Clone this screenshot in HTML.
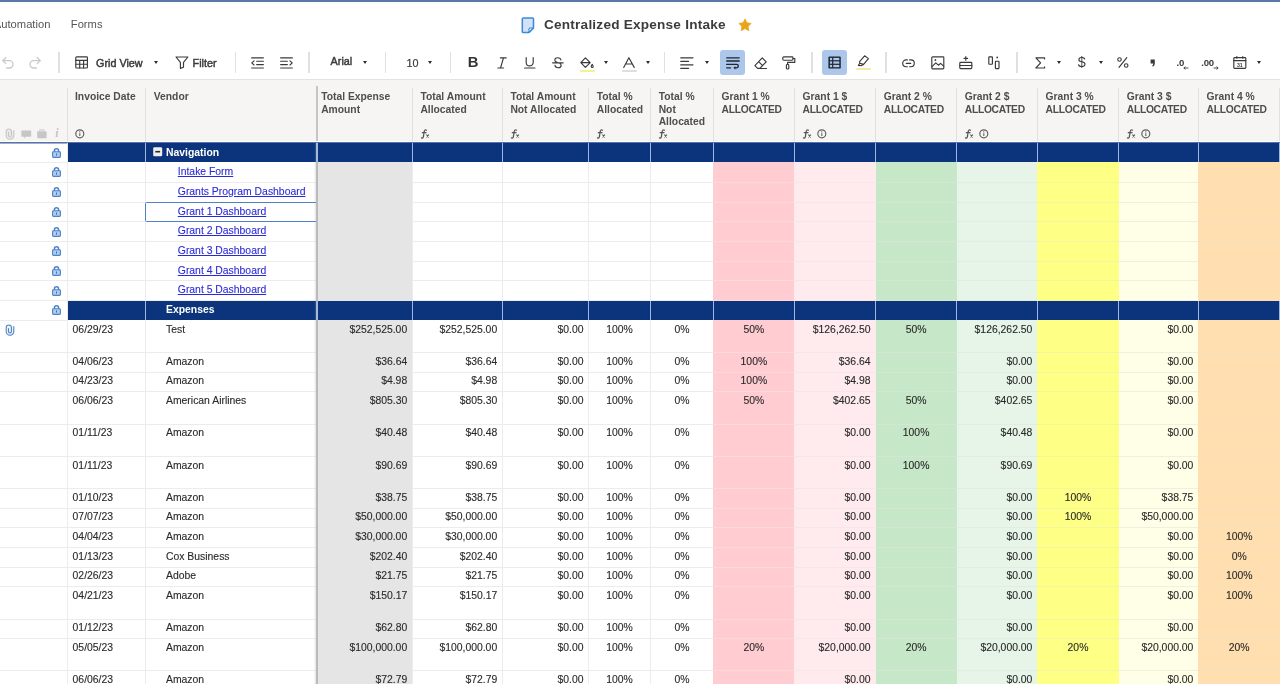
<!DOCTYPE html>
<html><head><meta charset="utf-8"><title>Centralized Expense Intake</title>
<style>
*{box-sizing:border-box;margin:0;padding:0}
html,body{width:1280px;height:684px;overflow:hidden;background:#fff}
body{position:relative;font-family:"Liberation Sans",sans-serif;color:#333}
.a{position:absolute}
.tb{position:absolute;overflow:visible}
.tb path,.tb line,.tb rect,.tb circle,.tb polyline,.tb polygon{vector-effect:none}
.sep{position:absolute;top:52.4px;height:20.6px;width:1.7px;background:#e0e0e0}
.caret{position:absolute;width:0;height:0;border-left:2.6px solid transparent;border-right:2.6px solid transparent;border-top:3.4px solid #2e2e2e;top:60.7px}
.tt{position:absolute;font-size:10.8px;color:#3a3a3a;white-space:nowrap;line-height:12px;-webkit-text-stroke:0.45px #3a3a3a}
.hd{position:absolute;font-weight:bold;font-size:10.3px;line-height:12.4px;color:#4e4e4e;white-space:nowrap;top:91.1px;letter-spacing:0px}
.al{letter-spacing:-0.3px}
.hl{position:absolute;top:88px;width:1px;height:53px;background:#e2e1e0}
.c{position:absolute;font-size:10.4px;line-height:12px;white-space:nowrap;color:#2a2a2a;-webkit-text-stroke:0.12px #2a2a2a}
.bg{position:absolute}
.gl{position:absolute;height:1px}
.vl{position:absolute;width:1px;background:#ececec}
.lk{color:#2a2ad8;-webkit-text-stroke:0.1px #2a2ad8;text-decoration:underline;text-underline-offset:1px}
.bt{color:#fff;font-weight:bold;-webkit-text-stroke:0}
#w{position:absolute;left:0;top:0;width:1280px;height:684px;overflow:hidden;will-change:transform}
</style></head><body><div id="w">

<div class="a" style="left:0;top:0;width:1280px;height:2.4px;background:#5a77a6"></div>
<div class="a" style="left:-6.2px;top:17.6px;font-size:11.2px;line-height:13px;color:#555;white-space:nowrap">Automation</div>
<div class="a" style="left:70.8px;top:17.6px;font-size:11.2px;line-height:13px;color:#555;white-space:nowrap">Forms</div>
<svg class="tb" style="left:520.6px;top:17px" width="14" height="17" viewBox="0 0 14 17"><path d="M2.2 1.1 H11.6 A0.9 0.9 0 0 1 12.5 2 V11 L8 15.6 H2.2 A0.9 0.9 0 0 1 1.3 14.7 V2 A0.9 0.9 0 0 1 2.2 1.1 Z" fill="#d3e2f7" stroke="#3b8ad8" stroke-width="1.5" stroke-linejoin="round"/><path d="M12.4 11 H9 A1 1 0 0 0 8 12 V15.5 Z" fill="#eef5fd" stroke="#3b8ad8" stroke-width="1.1" stroke-linejoin="round"/></svg>
<div class="a" style="left:544px;top:16.5px;font-size:13.6px;line-height:16px;font-weight:bold;color:#3c3c3c;white-space:nowrap;letter-spacing:0.22px" id="title">Centralized Expense Intake</div>
<svg class="tb" style="left:737.6px;top:18.2px" width="14" height="14" viewBox="0 0 24 24"><path d="M12 1.6l3.2 6.7 7.3 1-5.3 5.1 1.3 7.3L12 18.2l-6.5 3.5 1.3-7.3L1.5 9.3l7.3-1z" fill="#e9a41b" stroke="#e9a41b" stroke-width="1.4" stroke-linejoin="round"/></svg>
<div class="a" style="left:0;top:78.6px;width:1280px;height:1.6px;background:#e4e3e2"></div>
<svg class="tb" style="left:2px;top:56px" width="13" height="13" viewBox="0 0 13 13"><path d="M0.8 4.6 H7.3 A3.7 3.7 0 0 1 7.3 12 H4.6" stroke="#c9c9c9" fill="none" stroke-width="1.3" stroke-linecap="round" stroke-linejoin="round"/><path d="M3.8 1.5 L0.8 4.6 L3.8 7.6" stroke="#c9c9c9" fill="none" stroke-width="1.3" stroke-linecap="round" stroke-linejoin="round"/></svg>
<svg class="tb" style="left:28.4px;top:56px" width="13" height="13" viewBox="0 0 13 13"><path d="M12.2 4.6 H5.7 A3.7 3.7 0 0 0 5.7 12 H8.4" stroke="#c9c9c9" fill="none" stroke-width="1.3" stroke-linecap="round" stroke-linejoin="round"/><path d="M9.2 1.5 L12.2 4.6 L9.2 7.6" stroke="#c9c9c9" fill="none" stroke-width="1.3" stroke-linecap="round" stroke-linejoin="round"/></svg>
<div class="sep" style="left:58px"></div>
<div class="sep" style="left:234.6px"></div>
<div class="sep" style="left:308.2px"></div>
<div class="sep" style="left:384.6px"></div>
<div class="sep" style="left:449.6px"></div>
<div class="sep" style="left:663.8px"></div>
<div class="sep" style="left:811.4px"></div>
<div class="sep" style="left:885.4px"></div>
<div class="sep" style="left:1016px"></div>
<svg class="tb" style="left:75px;top:56.2px" width="14" height="13" viewBox="0 0 14 13"><rect x="0.8" y="0.8" width="11.6" height="11.2" rx="0.8" stroke="#3a3a3a" fill="none" stroke-width="1.15" stroke-linecap="round" stroke-linejoin="round"/><path d="M0.8 4.4 H12.4 M0.8 8.2 H12.4 M4.7 4.4 V12 M8.6 4.4 V12" stroke="#3a3a3a" fill="none" stroke-width="1.15" stroke-linecap="round" stroke-linejoin="round"/></svg>
<div class="tt" style="left:96px;top:56.6px" id="gv">Grid View</div>
<div class="caret" style="left:153.6px"></div>
<svg class="tb" style="left:175.4px;top:56px" width="14" height="14" viewBox="0 0 14 14"><path d="M1 1 H12.9 L8.5 6.3 V11.3 L5.4 12.4 V6.3 Z" stroke="#3a3a3a" fill="none" stroke-width="1.15" stroke-linecap="round" stroke-linejoin="round" stroke-width="1.45"/></svg>
<div class="tt" style="left:192.6px;top:56.6px" id="flt">Filter</div>
<svg class="tb" style="left:251.4px;top:56.6px" width="13" height="13" viewBox="0 0 13 13"><path d="M0.6 0.8 H12.4 M0.6 11 H12.4 M5.6 4.2 H12.4 M5.6 7.6 H12.4 M3 3.8 L0.8 5.9 L3 8" stroke="#3a3a3a" fill="none" stroke-width="1.15" stroke-linecap="round" stroke-linejoin="round" stroke-width="1.3"/></svg>
<svg class="tb" style="left:279.8px;top:56.6px" width="13" height="13" viewBox="0 0 13 13"><path d="M0.6 0.8 H12.4 M0.6 11 H12.4 M0.6 4.2 H7.4 M0.6 7.6 H7.4 M10 3.8 L12.2 5.9 L10 8" stroke="#3a3a3a" fill="none" stroke-width="1.15" stroke-linecap="round" stroke-linejoin="round" stroke-width="1.3"/></svg>
<div class="tt" style="left:330.6px;top:55.4px" id="arial">Arial</div>
<div class="caret" style="left:362.6px"></div>
<div class="tt" style="left:406.4px;top:56.6px;-webkit-text-stroke:0.2px #3a3a3a" id="ten">10</div>
<div class="caret" style="left:428px"></div>
<div class="a" style="left:467.8px;top:53.9px;font-size:14.8px;line-height:17px;font-weight:bold;color:#333">B</div>
<svg class="tb" style="left:496.6px;top:57px" width="10" height="12" viewBox="0 0 10 12"><path d="M3.4 0.9 H9.2 M0.8 11 H6.6 M6.5 0.9 L3.5 11" stroke="#3a3a3a" fill="none" stroke-width="1.15" stroke-linecap="round" stroke-linejoin="round" stroke-width="1.25"/></svg>
<svg class="tb" style="left:524px;top:57px" width="12" height="12" viewBox="0 0 12 12"><path d="M2.2 0.6 V5.4 A3.5 3.5 0 0 0 9.2 5.4 V0.6 M0.6 11 H11" stroke="#3a3a3a" fill="none" stroke-width="1.15" stroke-linecap="round" stroke-linejoin="round" stroke-width="1.25"/></svg>
<svg class="tb" style="left:552.4px;top:57px" width="12" height="12" viewBox="0 0 12 12"><path d="M8.9 3.0 C8.6 1.4 7.4 0.7 5.8 0.7 C4.2 0.7 2.8 1.5 2.8 3.0 C2.8 4.2 3.6 4.9 5.0 5.4 M3.0 8.4 C3.3 10.1 4.5 10.7 6.0 10.7 C7.7 10.7 9.1 9.9 9.1 8.4 C9.1 7.6 8.7 7.0 8.0 6.6 M0.6 5.8 H11.2" stroke="#3a3a3a" fill="none" stroke-width="1.15" stroke-linecap="round" stroke-linejoin="round" stroke-width="1.2"/></svg>
<svg class="tb" style="left:580.4px;top:56.6px" width="14" height="12" viewBox="0 0 14 12"><path d="M5.4 0.8 L10.2 5.6 L5.4 10.4 L0.8 5.6 Z M0.9 5.6 H10.1" stroke="#3a3a3a" fill="none" stroke-width="1.15" stroke-linecap="round" stroke-linejoin="round" stroke-width="1.2"/><path d="M12.2 7.4 C12.9 8.4 13.2 9 13.2 9.5 A1 1 0 0 1 11.2 9.5 C11.2 9 11.5 8.4 12.2 7.4 Z" stroke="#3a3a3a" fill="none" stroke-width="1.15" stroke-linecap="round" stroke-linejoin="round" stroke-width="1"/></svg>
<div class="a" style="left:580px;top:69.8px;width:15px;height:2.2px;background:#f3f38c;border-radius:1px"></div>
<div class="caret" style="left:604.4px"></div>
<svg class="tb" style="left:623px;top:56.8px" width="12" height="11" viewBox="0 0 12 11"><path d="M0.7 10.4 L5.9 0.7 L11.2 10.4 M2.6 7 H9.3" stroke="#3a3a3a" fill="none" stroke-width="1.15" stroke-linecap="round" stroke-linejoin="round" stroke-width="1.25"/></svg>
<div class="a" style="left:622px;top:69.8px;width:15px;height:2.2px;background:#dedede;border-radius:1px"></div>
<div class="caret" style="left:645.8px"></div>
<svg class="tb" style="left:680.4px;top:57px" width="14" height="12" viewBox="0 0 14 12"><path d="M0.7 0.8 H13 M0.7 4.3 H8.6 M0.7 7.8 H13 M0.7 11.3 H8.6" stroke="#3a3a3a" fill="none" stroke-width="1.15" stroke-linecap="round" stroke-linejoin="round"/></svg>
<div class="caret" style="left:704.8px"></div>
<div class="a" style="left:720px;top:50.2px;width:25.2px;height:24.8px;background:#adc7ea;border-radius:3px"></div>
<svg class="tb" style="left:725.8px;top:57px" width="14" height="12" viewBox="0 0 14 12"><path d="M0.7 0.8 H13.2 M0.7 4.0 H13.2 M0.7 7.4 H10.6 A1.7 1.7 0 0 1 10.6 10.8 H8.6 M0.7 10.8 H4.6" stroke="#1e2633" fill="none" stroke-width="1.35" stroke-linecap="round"/><path d="M9.4 9.2 L7.4 10.8 L9.4 12.4 Z" fill="#1e2633"/></svg>
<svg class="tb" style="left:754.4px;top:56.6px" width="14" height="13" viewBox="0 0 14 13"><path d="M8.2 0.9 L12.2 4.9 L5.8 11.3 H3.6 L0.9 8.6 Z M4.6 4.6 L8.6 8.6 M5.8 11.5 H12.6" stroke="#3a3a3a" fill="none" stroke-width="1.15" stroke-linecap="round" stroke-linejoin="round" stroke-width="1.2"/></svg>
<svg class="tb" style="left:782.4px;top:56px" width="14" height="14" viewBox="0 0 14 14"><rect x="0.8" y="0.8" width="10.2" height="3.4" rx="0.9" stroke="#3a3a3a" fill="none" stroke-width="1.15" stroke-linecap="round" stroke-linejoin="round" stroke-width="1.2"/><path d="M11 2.5 H12.8 V6.4 H5.6 V8.2" stroke="#3a3a3a" fill="none" stroke-width="1.15" stroke-linecap="round" stroke-linejoin="round" stroke-width="1.2"/><rect x="4.4" y="8.2" width="2.4" height="4.8" rx="1" stroke="#3a3a3a" fill="none" stroke-width="1.15" stroke-linecap="round" stroke-linejoin="round" stroke-width="1.2"/></svg>
<div class="a" style="left:822.2px;top:50.2px;width:25.2px;height:24.8px;background:#adc7ea;border-radius:3px"></div>
<svg class="tb" style="left:828.4px;top:56.4px" width="13" height="13" viewBox="0 0 13 13"><rect x="0.4" y="0.4" width="12.4" height="12.2" rx="1.2" fill="#1e2633"/><rect x="1.9" y="1.9" width="2.2" height="2.3" fill="#adc7ea"/><rect x="5.3" y="1.9" width="6" height="2.3" fill="#adc7ea"/><rect x="1.9" y="5.4" width="2.2" height="2.3" fill="#adc7ea"/><rect x="5.3" y="5.4" width="6" height="2.3" fill="#adc7ea"/><rect x="1.9" y="8.9" width="2.2" height="2.3" fill="#adc7ea"/><rect x="5.3" y="8.9" width="6" height="2.3" fill="#adc7ea"/></svg>
<svg class="tb" style="left:857px;top:55.4px" width="13" height="12" viewBox="0 0 13 12"><path d="M7.6 0.8 L11.4 3.6 L6.6 9.4 L2.8 8.2 L2.6 6.6 Z M2.8 8.2 L1.4 10.4 L4.4 10.6 L6.6 9.4" stroke="#3a3a3a" fill="none" stroke-width="1.15" stroke-linecap="round" stroke-linejoin="round" stroke-width="1.15"/></svg>
<div class="a" style="left:856px;top:68px;width:15px;height:2.2px;background:#f6e9a2;border-radius:1px"></div>
<svg class="tb" style="left:902.4px;top:58.6px" width="13" height="9" viewBox="0 0 13 9"><path d="M5.4 0.9 H4.1 A3.3 3.3 0 0 0 4.1 7.7 H5.4 M7.6 0.9 H8.9 A3.3 3.3 0 0 1 8.9 7.7 H7.6 M4.2 4.3 H8.8" stroke="#3a3a3a" fill="none" stroke-width="1.15" stroke-linecap="round" stroke-linejoin="round" stroke-width="1.25"/></svg>
<svg class="tb" style="left:930.6px;top:56px" width="14" height="14" viewBox="0 0 14 14"><rect x="0.8" y="0.8" width="12" height="12" rx="0.8" stroke="#3a3a3a" fill="none" stroke-width="1.15" stroke-linecap="round" stroke-linejoin="round" stroke-width="1.2"/><path d="M1 10.6 L4.8 6.8 L7.4 9.2 L9.6 7.4 L12.6 10.2" stroke="#3a3a3a" fill="none" stroke-width="1.15" stroke-linecap="round" stroke-linejoin="round" stroke-width="1.1"/><circle cx="4.4" cy="4" r="0.9" fill="#3a3a3a"/></svg>
<svg class="tb" style="left:958.8px;top:56px" width="14" height="14" viewBox="0 0 14 14"><rect x="0.8" y="6.4" width="12" height="6.2" rx="0.8" stroke="#3a3a3a" fill="none" stroke-width="1.15" stroke-linecap="round" stroke-linejoin="round" stroke-width="1.2"/><path d="M0.8 9.5 H12.8" stroke="#3a3a3a" fill="none" stroke-width="1.15" stroke-linecap="round" stroke-linejoin="round" stroke-width="1.2"/><path d="M6.8 0.6 V4.2 M5 2.4 H8.6" stroke="#3a3a3a" fill="none" stroke-width="1.15" stroke-linecap="round" stroke-linejoin="round" stroke-width="1.2"/></svg>
<svg class="tb" style="left:987.6px;top:56px" width="13" height="14" viewBox="0 0 13 14"><rect x="0.8" y="0.8" width="3.6" height="7.4" rx="0.5" stroke="#3a3a3a" fill="none" stroke-width="1.15" stroke-linecap="round" stroke-linejoin="round" stroke-width="1.2"/><rect x="7.4" y="5.2" width="3.6" height="7.4" rx="0.5" stroke="#3a3a3a" fill="none" stroke-width="1.15" stroke-linecap="round" stroke-linejoin="round" stroke-width="1.2"/><circle cx="9.2" cy="1.4" r="0.9" fill="#3a3a3a"/></svg>
<svg class="tb" style="left:1035px;top:57px" width="11" height="12" viewBox="0 0 11 12"><path d="M9.6 1.9 V0.8 H0.9 L5.6 5.9 L0.9 11 H9.6 V9.9" stroke="#3a3a3a" fill="none" stroke-width="1.15" stroke-linecap="round" stroke-linejoin="round" stroke-width="1.35"/></svg>
<div class="caret" style="left:1057px"></div>
<div class="a" style="left:1077.8px;top:53.8px;font-size:14.4px;line-height:17px;color:#3a3a3a">$</div>
<div class="caret" style="left:1098.8px"></div>
<svg class="tb" style="left:1117.4px;top:57.2px" width="12" height="11" viewBox="0 0 12 11"><path d="M9.8 0.7 L2 10.4" stroke="#3a3a3a" fill="none" stroke-width="1.15" stroke-linecap="round" stroke-linejoin="round" stroke-width="1.2"/><circle cx="2.5" cy="2.5" r="1.75" stroke="#3a3a3a" fill="none" stroke-width="1.15" stroke-linecap="round" stroke-linejoin="round" stroke-width="1.1"/><circle cx="9.2" cy="8.5" r="1.75" stroke="#3a3a3a" fill="none" stroke-width="1.15" stroke-linecap="round" stroke-linejoin="round" stroke-width="1.1"/></svg>
<svg class="tb" style="left:1149.6px;top:59px" width="6" height="8" viewBox="0 0 6 8"><path d="M0.6 0.4 H4.8 V4.4 C4.8 6 4 7.2 2.6 7.6 L2.2 6.6 C3 6.2 3.2 5.4 3.2 4.4 H0.6 Z" fill="#3a3a3a"/></svg>
<div class="a" style="left:1176.6px;top:57.4px;font-size:9.6px;line-height:11px;font-weight:bold;color:#3a3a3a;letter-spacing:-0.2px">.0</div>
<svg class="tb" style="left:1182.6px;top:66.4px" width="6" height="4" viewBox="0 0 6 4"><path d="M5.4 2 H1 M2.4 0.6 L0.8 2 L2.4 3.4" stroke="#3a3a3a" stroke-width="0.9" fill="none"/></svg>
<div class="a" style="left:1201.2px;top:57.4px;font-size:9.6px;line-height:11px;font-weight:bold;color:#3a3a3a;letter-spacing:-0.2px">.00</div>
<svg class="tb" style="left:1212.6px;top:66.4px" width="6" height="4" viewBox="0 0 6 4"><path d="M0.6 2 H5 M3.6 0.6 L5.2 2 L3.6 3.4" stroke="#3a3a3a" stroke-width="0.9" fill="none"/></svg>
<svg class="tb" style="left:1233.4px;top:56.4px" width="14" height="13" viewBox="0 0 14 13"><rect x="0.8" y="1.6" width="12" height="10.8" rx="0.8" stroke="#3a3a3a" fill="none" stroke-width="1.15" stroke-linecap="round" stroke-linejoin="round" stroke-width="1.15"/><path d="M0.8 4.6 H12.8 M3.8 0.5 V2.2 M9.8 0.5 V2.2" stroke="#3a3a3a" fill="none" stroke-width="1.15" stroke-linecap="round" stroke-linejoin="round" stroke-width="1.15"/><text x="6.8" y="10.6" font-size="5.2" font-weight="bold" text-anchor="middle" fill="#3a3a3a" stroke="none" font-family="Liberation Sans">31</text></svg>
<div class="caret" style="left:1257px"></div>
<div class="a" style="left:0;top:80.2px;width:1280px;height:60.8px;background:#f6f5f4"></div>
<div class="hl" style="left:67.3px"></div>
<div class="hl" style="left:144.9px"></div>
<div class="hl" style="left:411.7px"></div>
<div class="hl" style="left:501.7px"></div>
<div class="hl" style="left:588.1px"></div>
<div class="hl" style="left:650px"></div>
<div class="hl" style="left:712.9px"></div>
<div class="hl" style="left:793.9px"></div>
<div class="hl" style="left:875.1px"></div>
<div class="hl" style="left:956.1px"></div>
<div class="hl" style="left:1036.9px"></div>
<div class="hl" style="left:1118.1px"></div>
<div class="hl" style="left:1197.9px"></div>
<div class="hd" style="left:75px">Invoice Date</div>
<div class="hd" style="left:153.8px">Vendor</div>
<div class="hd" style="left:321.2px">Total Expense<br>Amount</div>
<div class="hd" style="left:420.4px">Total Amount<br>Allocated</div>
<div class="hd" style="left:510.4px">Total Amount<br>Not Allocated</div>
<div class="hd" style="left:596.8px">Total %<br>Allocated</div>
<div class="hd" style="left:658.7px">Total %<br>Not<br>Allocated</div>
<div class="hd" style="left:721.6px">Grant 1 %<br><span class="al">ALLOCATED</span></div>
<div class="hd" style="left:802.6px">Grant 1 $<br><span class="al">ALLOCATED</span></div>
<div class="hd" style="left:883.8px">Grant 2 %<br><span class="al">ALLOCATED</span></div>
<div class="hd" style="left:964.8px">Grant 2 $<br><span class="al">ALLOCATED</span></div>
<div class="hd" style="left:1045.6px">Grant 3 %<br><span class="al">ALLOCATED</span></div>
<div class="hd" style="left:1126.8px">Grant 3 $<br><span class="al">ALLOCATED</span></div>
<div class="hd" style="left:1206.6px">Grant 4 %<br><span class="al">ALLOCATED</span></div>
<svg class="tb" style="left:5.4px;top:127.6px" width="10" height="12" viewBox="0 0 10 12"><path d="M8.8 2.6 V7.4 A3.8 3.8 0 0 1 1.2 7.4 V3.6 A2.6 2.6 0 0 1 6.4 3.6 V7.4 A1.45 1.45 0 0 1 3.5 7.4 V4.4" stroke="#c6c6c6" stroke-width="1.15" fill="#ecebea" stroke-linecap="round"/></svg>
<svg class="tb" style="left:20.8px;top:129.8px" width="11" height="10" viewBox="0 0 11 10"><path d="M1 0.4 H9.6 A0.6 0.6 0 0 1 10.2 1 V6.2 A0.6 0.6 0 0 1 9.6 6.8 H4.8 L3.2 8.8 V6.8 H1 A0.6 0.6 0 0 1 0.4 6.2 V1 A0.6 0.6 0 0 1 1 0.4 Z" fill="#c6c6c6"/></svg>
<svg class="tb" style="left:36.8px;top:129.2px" width="10" height="10" viewBox="0 0 10 10"><rect x="0.2" y="2.2" width="9.4" height="7" rx="0.8" fill="#c6c6c6"/><rect x="2" y="0.4" width="5.8" height="1.2" rx="0.4" fill="#c6c6c6"/></svg>
<div class="a" style="left:55.2px;top:126.8px;font-family:'Liberation Serif',serif;font-style:italic;font-weight:bold;font-size:12.4px;line-height:13px;color:#c6c6c6">i</div>
<svg class="tb" style="left:75.4px;top:128.8px" width="10" height="10" viewBox="0 0 10 10"><circle cx="4.8" cy="4.8" r="4" stroke="#5e5e5e" stroke-width="1.15" fill="none"/><path d="M4.8 4.3 V6.9" stroke="#5e5e5e" stroke-width="1.05"/><circle cx="4.8" cy="2.9" r="0.6" fill="#5e5e5e"/></svg>
<svg class="tb" style="left:421px;top:128.8px" width="9" height="10" viewBox="0 0 9 10"><path d="M5.5 1.2 C4.5 0.5 3.5 1 3.3 2.2 L2.3 7.9 C2.1 9 1.4 9.4 0.5 8.9 M1.3 3.7 H5" stroke="#555" stroke-width="1.25" fill="none" stroke-linecap="round"/><path d="M5.4 5.6 L7.9 8.3 M7.9 5.6 L5.4 8.3" stroke="#555" stroke-width="1.05" fill="none"/></svg>
<svg class="tb" style="left:511px;top:128.8px" width="9" height="10" viewBox="0 0 9 10"><path d="M5.5 1.2 C4.5 0.5 3.5 1 3.3 2.2 L2.3 7.9 C2.1 9 1.4 9.4 0.5 8.9 M1.3 3.7 H5" stroke="#555" stroke-width="1.25" fill="none" stroke-linecap="round"/><path d="M5.4 5.6 L7.9 8.3 M7.9 5.6 L5.4 8.3" stroke="#555" stroke-width="1.05" fill="none"/></svg>
<svg class="tb" style="left:597.4px;top:128.8px" width="9" height="10" viewBox="0 0 9 10"><path d="M5.5 1.2 C4.5 0.5 3.5 1 3.3 2.2 L2.3 7.9 C2.1 9 1.4 9.4 0.5 8.9 M1.3 3.7 H5" stroke="#555" stroke-width="1.25" fill="none" stroke-linecap="round"/><path d="M5.4 5.6 L7.9 8.3 M7.9 5.6 L5.4 8.3" stroke="#555" stroke-width="1.05" fill="none"/></svg>
<svg class="tb" style="left:659.3px;top:128.8px" width="9" height="10" viewBox="0 0 9 10"><path d="M5.5 1.2 C4.5 0.5 3.5 1 3.3 2.2 L2.3 7.9 C2.1 9 1.4 9.4 0.5 8.9 M1.3 3.7 H5" stroke="#555" stroke-width="1.25" fill="none" stroke-linecap="round"/><path d="M5.4 5.6 L7.9 8.3 M7.9 5.6 L5.4 8.3" stroke="#555" stroke-width="1.05" fill="none"/></svg>
<svg class="tb" style="left:803.2px;top:128.8px" width="9" height="10" viewBox="0 0 9 10"><path d="M5.5 1.2 C4.5 0.5 3.5 1 3.3 2.2 L2.3 7.9 C2.1 9 1.4 9.4 0.5 8.9 M1.3 3.7 H5" stroke="#555" stroke-width="1.25" fill="none" stroke-linecap="round"/><path d="M5.4 5.6 L7.9 8.3 M7.9 5.6 L5.4 8.3" stroke="#555" stroke-width="1.05" fill="none"/></svg>
<svg class="tb" style="left:817px;top:128.9px" width="10" height="10" viewBox="0 0 10 10"><circle cx="4.8" cy="4.8" r="4" stroke="#5e5e5e" stroke-width="1.15" fill="none"/><path d="M4.8 4.3 V6.9" stroke="#5e5e5e" stroke-width="1.05"/><circle cx="4.8" cy="2.9" r="0.6" fill="#5e5e5e"/></svg>
<svg class="tb" style="left:965.4px;top:128.8px" width="9" height="10" viewBox="0 0 9 10"><path d="M5.5 1.2 C4.5 0.5 3.5 1 3.3 2.2 L2.3 7.9 C2.1 9 1.4 9.4 0.5 8.9 M1.3 3.7 H5" stroke="#555" stroke-width="1.25" fill="none" stroke-linecap="round"/><path d="M5.4 5.6 L7.9 8.3 M7.9 5.6 L5.4 8.3" stroke="#555" stroke-width="1.05" fill="none"/></svg>
<svg class="tb" style="left:979.2px;top:128.9px" width="10" height="10" viewBox="0 0 10 10"><circle cx="4.8" cy="4.8" r="4" stroke="#5e5e5e" stroke-width="1.15" fill="none"/><path d="M4.8 4.3 V6.9" stroke="#5e5e5e" stroke-width="1.05"/><circle cx="4.8" cy="2.9" r="0.6" fill="#5e5e5e"/></svg>
<svg class="tb" style="left:1127.4px;top:128.8px" width="9" height="10" viewBox="0 0 9 10"><path d="M5.5 1.2 C4.5 0.5 3.5 1 3.3 2.2 L2.3 7.9 C2.1 9 1.4 9.4 0.5 8.9 M1.3 3.7 H5" stroke="#555" stroke-width="1.25" fill="none" stroke-linecap="round"/><path d="M5.4 5.6 L7.9 8.3 M7.9 5.6 L5.4 8.3" stroke="#555" stroke-width="1.05" fill="none"/></svg>
<svg class="tb" style="left:1141.2px;top:128.9px" width="10" height="10" viewBox="0 0 10 10"><circle cx="4.8" cy="4.8" r="4" stroke="#5e5e5e" stroke-width="1.15" fill="none"/><path d="M4.8 4.3 V6.9" stroke="#5e5e5e" stroke-width="1.05"/><circle cx="4.8" cy="2.9" r="0.6" fill="#5e5e5e"/></svg>
<div class="hl" style="left:1279px"></div>
<div class="a" style="left:315.8px;top:86px;width:2.2px;height:55px;background:#c6c5c3"></div>
<div class="a" style="left:0;top:142px;width:1280px;height:1.4px;background:#5772a8"></div>
<div class="a" style="left:0;top:143px;width:67.4px;height:1px;background:#9fb0cf;z-index:3"></div>
<div class="bg" style="left:317.6px;top:143px;width:94.6px;height:541px;background:#e5e5e5"></div>
<div class="bg" style="left:713.4px;top:143px;width:81px;height:541px;background:#ffccd2"></div>
<div class="bg" style="left:794.4px;top:143px;width:81.2px;height:541px;background:#ffebee"></div>
<div class="bg" style="left:875.6px;top:143px;width:81px;height:541px;background:#c6e7c8"></div>
<div class="bg" style="left:956.6px;top:143px;width:80.8px;height:541px;background:#e7f5e9"></div>
<div class="bg" style="left:1037.4px;top:143px;width:81.2px;height:541px;background:#feff85"></div>
<div class="bg" style="left:1118.6px;top:143px;width:79.8px;height:541px;background:#fffee6"></div>
<div class="bg" style="left:1198.4px;top:143px;width:81.6px;height:541px;background:#ffdfb0"></div>
<div class="vl" style="left:66.9px;top:143px;height:541px"></div>
<div class="vl" style="left:144.9px;top:143px;height:541px"></div>
<div class="vl" style="left:411.7px;top:143px;height:541px"></div>
<div class="vl" style="left:501.7px;top:143px;height:541px"></div>
<div class="vl" style="left:588.1px;top:143px;height:541px"></div>
<div class="vl" style="left:650px;top:143px;height:541px"></div>
<div class="a" style="left:313.6px;top:143px;width:4.4px;height:541px;background:linear-gradient(to right,rgba(150,150,150,0),rgba(150,150,150,0.25) 45%,#bcbcbc 55%,#b9b9b9 100%);z-index:2"></div>
<div class="gl" style="left:0;top:162.2px;width:67.4px;background:#ececec"></div>
<div class="bg" style="left:67.8px;top:143px;width:1212.2px;height:19.1px;background:#0b347d"></div>
<div class="a" style="left:144.8px;top:143.2px;width:1.2px;height:18.9px;background:#9fb6e4;z-index:0"></div>
<div class="a" style="left:315.8px;top:143.2px;width:2.2px;height:18.9px;background:#a9b9d9;z-index:3"></div>
<div class="a" style="left:411.6px;top:143.2px;width:1.2px;height:18.9px;background:#9fb6e4;z-index:0"></div>
<div class="a" style="left:501.6px;top:143.2px;width:1.2px;height:18.9px;background:#9fb6e4;z-index:0"></div>
<div class="a" style="left:588px;top:143.2px;width:1.2px;height:18.9px;background:#9fb6e4;z-index:0"></div>
<div class="a" style="left:649.9px;top:143.2px;width:1.2px;height:18.9px;background:#9fb6e4;z-index:0"></div>
<div class="a" style="left:712.8px;top:143.2px;width:1.2px;height:18.9px;background:#9fb6e4;z-index:0"></div>
<div class="a" style="left:793.8px;top:143.2px;width:1.2px;height:18.9px;background:#9fb6e4;z-index:0"></div>
<div class="a" style="left:875px;top:143.2px;width:1.2px;height:18.9px;background:#9fb6e4;z-index:0"></div>
<div class="a" style="left:956px;top:143.2px;width:1.2px;height:18.9px;background:#9fb6e4;z-index:0"></div>
<div class="a" style="left:1036.8px;top:143.2px;width:1.2px;height:18.9px;background:#9fb6e4;z-index:0"></div>
<div class="a" style="left:1118px;top:143.2px;width:1.2px;height:18.9px;background:#9fb6e4;z-index:0"></div>
<div class="a" style="left:1197.8px;top:143.2px;width:1.2px;height:18.9px;background:#9fb6e4;z-index:0"></div>
<div class="a" style="left:1278.8px;top:143.2px;width:1.2px;height:18.9px;background:#9fb6e4"></div>
<svg class="tb" style="left:152.6px;top:147.2px" width="10" height="10" viewBox="0 0 10 10"><rect x="0.2" y="0.2" width="9" height="9" rx="1.3" fill="#efefef"/><rect x="2.3" y="3.9" width="4.8" height="1.6" fill="#2a2a2a"/></svg>
<div class="c bt" style="left:166px;top:146.6px">Navigation</div>
<svg class="tb" style="left:52px;top:147.7px" width="9" height="10" viewBox="0 0 9 10"><path d="M2.4 4 V2.9 A2.1 2.1 0 0 1 6.6 2.9 V4" stroke="#4d82c6" stroke-width="1.5" fill="none"/><rect x="0.6" y="3.8" width="7.8" height="5.6" rx="0.8" fill="#aecbf0" stroke="#4d82c6" stroke-width="1.1"/><rect x="4" y="5.5" width="1" height="2.1" fill="#3b6fb3"/></svg>
<div class="gl" style="left:0;top:181.9px;width:315.8px;background:#ececec"></div>
<div class="gl" style="left:412.2px;top:181.9px;width:301.2px;background:#ececec"></div>
<div class="gl" style="left:713.4px;top:181.9px;width:81px;background:#fad9dd"></div>
<div class="gl" style="left:794.4px;top:181.9px;width:81.2px;background:#f6e6e9"></div>
<div class="gl" style="left:875.6px;top:181.9px;width:81px;background:#d3e6d5"></div>
<div class="gl" style="left:956.6px;top:181.9px;width:80.8px;background:#e3ebe5"></div>
<div class="gl" style="left:1037.4px;top:181.9px;width:81.2px;background:#f5f5a0"></div>
<div class="gl" style="left:1118.6px;top:181.9px;width:79.8px;background:#f1f0e0"></div>
<div class="gl" style="left:1198.4px;top:181.9px;width:81.6px;background:#f7dfba"></div>
<div class="c lk" style="left:177.8px;top:166.1px">Intake Form</div>
<svg class="tb" style="left:52px;top:167.4px" width="9" height="10" viewBox="0 0 9 10"><path d="M2.4 4 V2.9 A2.1 2.1 0 0 1 6.6 2.9 V4" stroke="#4d82c6" stroke-width="1.5" fill="none"/><rect x="0.6" y="3.8" width="7.8" height="5.6" rx="0.8" fill="#aecbf0" stroke="#4d82c6" stroke-width="1.1"/><rect x="4" y="5.5" width="1" height="2.1" fill="#3b6fb3"/></svg>
<div class="gl" style="left:0;top:201.6px;width:315.8px;background:#ececec"></div>
<div class="gl" style="left:412.2px;top:201.6px;width:301.2px;background:#ececec"></div>
<div class="gl" style="left:713.4px;top:201.6px;width:81px;background:#fad9dd"></div>
<div class="gl" style="left:794.4px;top:201.6px;width:81.2px;background:#f6e6e9"></div>
<div class="gl" style="left:875.6px;top:201.6px;width:81px;background:#d3e6d5"></div>
<div class="gl" style="left:956.6px;top:201.6px;width:80.8px;background:#e3ebe5"></div>
<div class="gl" style="left:1037.4px;top:201.6px;width:81.2px;background:#f5f5a0"></div>
<div class="gl" style="left:1118.6px;top:201.6px;width:79.8px;background:#f1f0e0"></div>
<div class="gl" style="left:1198.4px;top:201.6px;width:81.6px;background:#f7dfba"></div>
<div class="c lk" style="left:177.8px;top:185.8px">Grants Program Dashboard</div>
<svg class="tb" style="left:52px;top:187.1px" width="9" height="10" viewBox="0 0 9 10"><path d="M2.4 4 V2.9 A2.1 2.1 0 0 1 6.6 2.9 V4" stroke="#4d82c6" stroke-width="1.5" fill="none"/><rect x="0.6" y="3.8" width="7.8" height="5.6" rx="0.8" fill="#aecbf0" stroke="#4d82c6" stroke-width="1.1"/><rect x="4" y="5.5" width="1" height="2.1" fill="#3b6fb3"/></svg>
<div class="gl" style="left:0;top:221.3px;width:315.8px;background:#ececec"></div>
<div class="gl" style="left:412.2px;top:221.3px;width:301.2px;background:#ececec"></div>
<div class="gl" style="left:713.4px;top:221.3px;width:81px;background:#fad9dd"></div>
<div class="gl" style="left:794.4px;top:221.3px;width:81.2px;background:#f6e6e9"></div>
<div class="gl" style="left:875.6px;top:221.3px;width:81px;background:#d3e6d5"></div>
<div class="gl" style="left:956.6px;top:221.3px;width:80.8px;background:#e3ebe5"></div>
<div class="gl" style="left:1037.4px;top:221.3px;width:81.2px;background:#f5f5a0"></div>
<div class="gl" style="left:1118.6px;top:221.3px;width:79.8px;background:#f1f0e0"></div>
<div class="gl" style="left:1198.4px;top:221.3px;width:81.6px;background:#f7dfba"></div>
<div class="c lk" style="left:177.8px;top:205.5px">Grant 1 Dashboard</div>
<svg class="tb" style="left:52px;top:206.8px" width="9" height="10" viewBox="0 0 9 10"><path d="M2.4 4 V2.9 A2.1 2.1 0 0 1 6.6 2.9 V4" stroke="#4d82c6" stroke-width="1.5" fill="none"/><rect x="0.6" y="3.8" width="7.8" height="5.6" rx="0.8" fill="#aecbf0" stroke="#4d82c6" stroke-width="1.1"/><rect x="4" y="5.5" width="1" height="2.1" fill="#3b6fb3"/></svg>
<div class="a" style="left:145.2px;top:201.5px;width:173.2px;height:20.5px;border:1.2px solid #4d82c4;border-radius:1.6px"></div>
<div class="gl" style="left:0;top:241px;width:315.8px;background:#ececec"></div>
<div class="gl" style="left:412.2px;top:241px;width:301.2px;background:#ececec"></div>
<div class="gl" style="left:713.4px;top:241px;width:81px;background:#fad9dd"></div>
<div class="gl" style="left:794.4px;top:241px;width:81.2px;background:#f6e6e9"></div>
<div class="gl" style="left:875.6px;top:241px;width:81px;background:#d3e6d5"></div>
<div class="gl" style="left:956.6px;top:241px;width:80.8px;background:#e3ebe5"></div>
<div class="gl" style="left:1037.4px;top:241px;width:81.2px;background:#f5f5a0"></div>
<div class="gl" style="left:1118.6px;top:241px;width:79.8px;background:#f1f0e0"></div>
<div class="gl" style="left:1198.4px;top:241px;width:81.6px;background:#f7dfba"></div>
<div class="c lk" style="left:177.8px;top:225.2px">Grant 2 Dashboard</div>
<svg class="tb" style="left:52px;top:226.5px" width="9" height="10" viewBox="0 0 9 10"><path d="M2.4 4 V2.9 A2.1 2.1 0 0 1 6.6 2.9 V4" stroke="#4d82c6" stroke-width="1.5" fill="none"/><rect x="0.6" y="3.8" width="7.8" height="5.6" rx="0.8" fill="#aecbf0" stroke="#4d82c6" stroke-width="1.1"/><rect x="4" y="5.5" width="1" height="2.1" fill="#3b6fb3"/></svg>
<div class="gl" style="left:0;top:260.7px;width:315.8px;background:#ececec"></div>
<div class="gl" style="left:412.2px;top:260.7px;width:301.2px;background:#ececec"></div>
<div class="gl" style="left:713.4px;top:260.7px;width:81px;background:#fad9dd"></div>
<div class="gl" style="left:794.4px;top:260.7px;width:81.2px;background:#f6e6e9"></div>
<div class="gl" style="left:875.6px;top:260.7px;width:81px;background:#d3e6d5"></div>
<div class="gl" style="left:956.6px;top:260.7px;width:80.8px;background:#e3ebe5"></div>
<div class="gl" style="left:1037.4px;top:260.7px;width:81.2px;background:#f5f5a0"></div>
<div class="gl" style="left:1118.6px;top:260.7px;width:79.8px;background:#f1f0e0"></div>
<div class="gl" style="left:1198.4px;top:260.7px;width:81.6px;background:#f7dfba"></div>
<div class="c lk" style="left:177.8px;top:244.9px">Grant 3 Dashboard</div>
<svg class="tb" style="left:52px;top:246.2px" width="9" height="10" viewBox="0 0 9 10"><path d="M2.4 4 V2.9 A2.1 2.1 0 0 1 6.6 2.9 V4" stroke="#4d82c6" stroke-width="1.5" fill="none"/><rect x="0.6" y="3.8" width="7.8" height="5.6" rx="0.8" fill="#aecbf0" stroke="#4d82c6" stroke-width="1.1"/><rect x="4" y="5.5" width="1" height="2.1" fill="#3b6fb3"/></svg>
<div class="gl" style="left:0;top:280.4px;width:315.8px;background:#ececec"></div>
<div class="gl" style="left:412.2px;top:280.4px;width:301.2px;background:#ececec"></div>
<div class="gl" style="left:713.4px;top:280.4px;width:81px;background:#fad9dd"></div>
<div class="gl" style="left:794.4px;top:280.4px;width:81.2px;background:#f6e6e9"></div>
<div class="gl" style="left:875.6px;top:280.4px;width:81px;background:#d3e6d5"></div>
<div class="gl" style="left:956.6px;top:280.4px;width:80.8px;background:#e3ebe5"></div>
<div class="gl" style="left:1037.4px;top:280.4px;width:81.2px;background:#f5f5a0"></div>
<div class="gl" style="left:1118.6px;top:280.4px;width:79.8px;background:#f1f0e0"></div>
<div class="gl" style="left:1198.4px;top:280.4px;width:81.6px;background:#f7dfba"></div>
<div class="c lk" style="left:177.8px;top:264.6px">Grant 4 Dashboard</div>
<svg class="tb" style="left:52px;top:265.9px" width="9" height="10" viewBox="0 0 9 10"><path d="M2.4 4 V2.9 A2.1 2.1 0 0 1 6.6 2.9 V4" stroke="#4d82c6" stroke-width="1.5" fill="none"/><rect x="0.6" y="3.8" width="7.8" height="5.6" rx="0.8" fill="#aecbf0" stroke="#4d82c6" stroke-width="1.1"/><rect x="4" y="5.5" width="1" height="2.1" fill="#3b6fb3"/></svg>
<div class="gl" style="left:0;top:300.1px;width:315.8px;background:#ececec"></div>
<div class="gl" style="left:412.2px;top:300.1px;width:301.2px;background:#ececec"></div>
<div class="gl" style="left:713.4px;top:300.1px;width:81px;background:#fad9dd"></div>
<div class="gl" style="left:794.4px;top:300.1px;width:81.2px;background:#f6e6e9"></div>
<div class="gl" style="left:875.6px;top:300.1px;width:81px;background:#d3e6d5"></div>
<div class="gl" style="left:956.6px;top:300.1px;width:80.8px;background:#e3ebe5"></div>
<div class="gl" style="left:1037.4px;top:300.1px;width:81.2px;background:#f5f5a0"></div>
<div class="gl" style="left:1118.6px;top:300.1px;width:79.8px;background:#f1f0e0"></div>
<div class="gl" style="left:1198.4px;top:300.1px;width:81.6px;background:#f7dfba"></div>
<div class="c lk" style="left:177.8px;top:284.3px">Grant 5 Dashboard</div>
<svg class="tb" style="left:52px;top:285.6px" width="9" height="10" viewBox="0 0 9 10"><path d="M2.4 4 V2.9 A2.1 2.1 0 0 1 6.6 2.9 V4" stroke="#4d82c6" stroke-width="1.5" fill="none"/><rect x="0.6" y="3.8" width="7.8" height="5.6" rx="0.8" fill="#aecbf0" stroke="#4d82c6" stroke-width="1.1"/><rect x="4" y="5.5" width="1" height="2.1" fill="#3b6fb3"/></svg>
<div class="gl" style="left:0;top:319.7px;width:67.4px;background:#ececec"></div>
<div class="bg" style="left:67.8px;top:300.6px;width:1212.2px;height:19px;background:#0b347d"></div>
<div class="a" style="left:144.8px;top:300.8px;width:1.2px;height:18.8px;background:#9fb6e4;z-index:0"></div>
<div class="a" style="left:315.8px;top:300.8px;width:2.2px;height:18.8px;background:#a9b9d9;z-index:3"></div>
<div class="a" style="left:411.6px;top:300.8px;width:1.2px;height:18.8px;background:#9fb6e4;z-index:0"></div>
<div class="a" style="left:501.6px;top:300.8px;width:1.2px;height:18.8px;background:#9fb6e4;z-index:0"></div>
<div class="a" style="left:588px;top:300.8px;width:1.2px;height:18.8px;background:#9fb6e4;z-index:0"></div>
<div class="a" style="left:649.9px;top:300.8px;width:1.2px;height:18.8px;background:#9fb6e4;z-index:0"></div>
<div class="a" style="left:712.8px;top:300.8px;width:1.2px;height:18.8px;background:#9fb6e4;z-index:0"></div>
<div class="a" style="left:793.8px;top:300.8px;width:1.2px;height:18.8px;background:#9fb6e4;z-index:0"></div>
<div class="a" style="left:875px;top:300.8px;width:1.2px;height:18.8px;background:#9fb6e4;z-index:0"></div>
<div class="a" style="left:956px;top:300.8px;width:1.2px;height:18.8px;background:#9fb6e4;z-index:0"></div>
<div class="a" style="left:1036.8px;top:300.8px;width:1.2px;height:18.8px;background:#9fb6e4;z-index:0"></div>
<div class="a" style="left:1118px;top:300.8px;width:1.2px;height:18.8px;background:#9fb6e4;z-index:0"></div>
<div class="a" style="left:1197.8px;top:300.8px;width:1.2px;height:18.8px;background:#9fb6e4;z-index:0"></div>
<div class="a" style="left:1278.8px;top:300.8px;width:1.2px;height:18.8px;background:#9fb6e4"></div>
<div class="c bt" style="left:166px;top:304.2px">Expenses</div>
<svg class="tb" style="left:52px;top:305.3px" width="9" height="10" viewBox="0 0 9 10"><path d="M2.4 4 V2.9 A2.1 2.1 0 0 1 6.6 2.9 V4" stroke="#4d82c6" stroke-width="1.5" fill="none"/><rect x="0.6" y="3.8" width="7.8" height="5.6" rx="0.8" fill="#aecbf0" stroke="#4d82c6" stroke-width="1.1"/><rect x="4" y="5.5" width="1" height="2.1" fill="#3b6fb3"/></svg>
<div class="gl" style="left:0;top:351.8px;width:315.8px;background:#ececec"></div>
<div class="gl" style="left:412.2px;top:351.8px;width:301.2px;background:#ececec"></div>
<div class="gl" style="left:713.4px;top:351.8px;width:81px;background:#fad9dd"></div>
<div class="gl" style="left:794.4px;top:351.8px;width:81.2px;background:#f6e6e9"></div>
<div class="gl" style="left:875.6px;top:351.8px;width:81px;background:#d3e6d5"></div>
<div class="gl" style="left:956.6px;top:351.8px;width:80.8px;background:#e3ebe5"></div>
<div class="gl" style="left:1037.4px;top:351.8px;width:81.2px;background:#f5f5a0"></div>
<div class="gl" style="left:1118.6px;top:351.8px;width:79.8px;background:#f1f0e0"></div>
<div class="gl" style="left:1198.4px;top:351.8px;width:81.6px;background:#f7dfba"></div>
<div class="c" style="left:72.6px;top:323.5px">06/29/23</div>
<div class="c" style="left:166px;top:323.5px">Test</div>
<div class="c" style="left:317.6px;width:89.6px;text-align:right;top:323.5px">$252,525.00</div>
<div class="c" style="left:412.2px;width:85px;text-align:right;top:323.5px">$252,525.00</div>
<div class="c" style="left:502.2px;width:81.4px;text-align:right;top:323.5px">$0.00</div>
<div class="c" style="left:588.6px;width:61.9px;text-align:center;top:323.5px">100%</div>
<div class="c" style="left:650.5px;width:62.9px;text-align:center;top:323.5px">0%</div>
<div class="c" style="left:713.4px;width:81px;text-align:center;top:323.5px">50%</div>
<div class="c" style="left:794.4px;width:76.2px;text-align:right;top:323.5px">$126,262.50</div>
<div class="c" style="left:875.6px;width:81px;text-align:center;top:323.5px">50%</div>
<div class="c" style="left:956.6px;width:75.8px;text-align:right;top:323.5px">$126,262.50</div>
<div class="c" style="left:1118.6px;width:74.8px;text-align:right;top:323.5px">$0.00</div>
<svg class="tb" style="left:5.2px;top:324.4px" width="10" height="12" viewBox="0 0 10 12"><path d="M8.8 2.6 V7.4 A3.8 3.8 0 0 1 1.2 7.4 V3.6 A2.6 2.6 0 0 1 6.4 3.6 V7.4 A1.45 1.45 0 0 1 3.5 7.4 V4.4" stroke="#4f80bf" stroke-width="1.05" fill="#dbe8f9" fill-opacity="0.6" stroke-linecap="round"/></svg>
<div class="gl" style="left:0;top:371.5px;width:315.8px;background:#ececec"></div>
<div class="gl" style="left:412.2px;top:371.5px;width:301.2px;background:#ececec"></div>
<div class="gl" style="left:713.4px;top:371.5px;width:81px;background:#fad9dd"></div>
<div class="gl" style="left:794.4px;top:371.5px;width:81.2px;background:#f6e6e9"></div>
<div class="gl" style="left:875.6px;top:371.5px;width:81px;background:#d3e6d5"></div>
<div class="gl" style="left:956.6px;top:371.5px;width:80.8px;background:#e3ebe5"></div>
<div class="gl" style="left:1037.4px;top:371.5px;width:81.2px;background:#f5f5a0"></div>
<div class="gl" style="left:1118.6px;top:371.5px;width:79.8px;background:#f1f0e0"></div>
<div class="gl" style="left:1198.4px;top:371.5px;width:81.6px;background:#f7dfba"></div>
<div class="c" style="left:72.6px;top:355.6px">04/06/23</div>
<div class="c" style="left:166px;top:355.6px">Amazon</div>
<div class="c" style="left:317.6px;width:89.6px;text-align:right;top:355.6px">$36.64</div>
<div class="c" style="left:412.2px;width:85px;text-align:right;top:355.6px">$36.64</div>
<div class="c" style="left:502.2px;width:81.4px;text-align:right;top:355.6px">$0.00</div>
<div class="c" style="left:588.6px;width:61.9px;text-align:center;top:355.6px">100%</div>
<div class="c" style="left:650.5px;width:62.9px;text-align:center;top:355.6px">0%</div>
<div class="c" style="left:713.4px;width:81px;text-align:center;top:355.6px">100%</div>
<div class="c" style="left:794.4px;width:76.2px;text-align:right;top:355.6px">$36.64</div>
<div class="c" style="left:956.6px;width:75.8px;text-align:right;top:355.6px">$0.00</div>
<div class="c" style="left:1118.6px;width:74.8px;text-align:right;top:355.6px">$0.00</div>
<div class="gl" style="left:0;top:391.2px;width:315.8px;background:#ececec"></div>
<div class="gl" style="left:412.2px;top:391.2px;width:301.2px;background:#ececec"></div>
<div class="gl" style="left:713.4px;top:391.2px;width:81px;background:#fad9dd"></div>
<div class="gl" style="left:794.4px;top:391.2px;width:81.2px;background:#f6e6e9"></div>
<div class="gl" style="left:875.6px;top:391.2px;width:81px;background:#d3e6d5"></div>
<div class="gl" style="left:956.6px;top:391.2px;width:80.8px;background:#e3ebe5"></div>
<div class="gl" style="left:1037.4px;top:391.2px;width:81.2px;background:#f5f5a0"></div>
<div class="gl" style="left:1118.6px;top:391.2px;width:79.8px;background:#f1f0e0"></div>
<div class="gl" style="left:1198.4px;top:391.2px;width:81.6px;background:#f7dfba"></div>
<div class="c" style="left:72.6px;top:375.3px">04/23/23</div>
<div class="c" style="left:166px;top:375.3px">Amazon</div>
<div class="c" style="left:317.6px;width:89.6px;text-align:right;top:375.3px">$4.98</div>
<div class="c" style="left:412.2px;width:85px;text-align:right;top:375.3px">$4.98</div>
<div class="c" style="left:502.2px;width:81.4px;text-align:right;top:375.3px">$0.00</div>
<div class="c" style="left:588.6px;width:61.9px;text-align:center;top:375.3px">100%</div>
<div class="c" style="left:650.5px;width:62.9px;text-align:center;top:375.3px">0%</div>
<div class="c" style="left:713.4px;width:81px;text-align:center;top:375.3px">100%</div>
<div class="c" style="left:794.4px;width:76.2px;text-align:right;top:375.3px">$4.98</div>
<div class="c" style="left:956.6px;width:75.8px;text-align:right;top:375.3px">$0.00</div>
<div class="c" style="left:1118.6px;width:74.8px;text-align:right;top:375.3px">$0.00</div>
<div class="gl" style="left:0;top:423.6px;width:315.8px;background:#ececec"></div>
<div class="gl" style="left:412.2px;top:423.6px;width:301.2px;background:#ececec"></div>
<div class="gl" style="left:713.4px;top:423.6px;width:81px;background:#fad9dd"></div>
<div class="gl" style="left:794.4px;top:423.6px;width:81.2px;background:#f6e6e9"></div>
<div class="gl" style="left:875.6px;top:423.6px;width:81px;background:#d3e6d5"></div>
<div class="gl" style="left:956.6px;top:423.6px;width:80.8px;background:#e3ebe5"></div>
<div class="gl" style="left:1037.4px;top:423.6px;width:81.2px;background:#f5f5a0"></div>
<div class="gl" style="left:1118.6px;top:423.6px;width:79.8px;background:#f1f0e0"></div>
<div class="gl" style="left:1198.4px;top:423.6px;width:81.6px;background:#f7dfba"></div>
<div class="c" style="left:72.6px;top:395px">06/06/23</div>
<div class="c" style="left:166px;top:395px">American Airlines</div>
<div class="c" style="left:317.6px;width:89.6px;text-align:right;top:395px">$805.30</div>
<div class="c" style="left:412.2px;width:85px;text-align:right;top:395px">$805.30</div>
<div class="c" style="left:502.2px;width:81.4px;text-align:right;top:395px">$0.00</div>
<div class="c" style="left:588.6px;width:61.9px;text-align:center;top:395px">100%</div>
<div class="c" style="left:650.5px;width:62.9px;text-align:center;top:395px">0%</div>
<div class="c" style="left:713.4px;width:81px;text-align:center;top:395px">50%</div>
<div class="c" style="left:794.4px;width:76.2px;text-align:right;top:395px">$402.65</div>
<div class="c" style="left:875.6px;width:81px;text-align:center;top:395px">50%</div>
<div class="c" style="left:956.6px;width:75.8px;text-align:right;top:395px">$402.65</div>
<div class="c" style="left:1118.6px;width:74.8px;text-align:right;top:395px">$0.00</div>
<div class="gl" style="left:0;top:455.8px;width:315.8px;background:#ececec"></div>
<div class="gl" style="left:412.2px;top:455.8px;width:301.2px;background:#ececec"></div>
<div class="gl" style="left:713.4px;top:455.8px;width:81px;background:#fad9dd"></div>
<div class="gl" style="left:794.4px;top:455.8px;width:81.2px;background:#f6e6e9"></div>
<div class="gl" style="left:875.6px;top:455.8px;width:81px;background:#d3e6d5"></div>
<div class="gl" style="left:956.6px;top:455.8px;width:80.8px;background:#e3ebe5"></div>
<div class="gl" style="left:1037.4px;top:455.8px;width:81.2px;background:#f5f5a0"></div>
<div class="gl" style="left:1118.6px;top:455.8px;width:79.8px;background:#f1f0e0"></div>
<div class="gl" style="left:1198.4px;top:455.8px;width:81.6px;background:#f7dfba"></div>
<div class="c" style="left:72.6px;top:427.4px">01/11/23</div>
<div class="c" style="left:166px;top:427.4px">Amazon</div>
<div class="c" style="left:317.6px;width:89.6px;text-align:right;top:427.4px">$40.48</div>
<div class="c" style="left:412.2px;width:85px;text-align:right;top:427.4px">$40.48</div>
<div class="c" style="left:502.2px;width:81.4px;text-align:right;top:427.4px">$0.00</div>
<div class="c" style="left:588.6px;width:61.9px;text-align:center;top:427.4px">100%</div>
<div class="c" style="left:650.5px;width:62.9px;text-align:center;top:427.4px">0%</div>
<div class="c" style="left:794.4px;width:76.2px;text-align:right;top:427.4px">$0.00</div>
<div class="c" style="left:875.6px;width:81px;text-align:center;top:427.4px">100%</div>
<div class="c" style="left:956.6px;width:75.8px;text-align:right;top:427.4px">$40.48</div>
<div class="c" style="left:1118.6px;width:74.8px;text-align:right;top:427.4px">$0.00</div>
<div class="gl" style="left:0;top:487.8px;width:315.8px;background:#ececec"></div>
<div class="gl" style="left:412.2px;top:487.8px;width:301.2px;background:#ececec"></div>
<div class="gl" style="left:713.4px;top:487.8px;width:81px;background:#fad9dd"></div>
<div class="gl" style="left:794.4px;top:487.8px;width:81.2px;background:#f6e6e9"></div>
<div class="gl" style="left:875.6px;top:487.8px;width:81px;background:#d3e6d5"></div>
<div class="gl" style="left:956.6px;top:487.8px;width:80.8px;background:#e3ebe5"></div>
<div class="gl" style="left:1037.4px;top:487.8px;width:81.2px;background:#f5f5a0"></div>
<div class="gl" style="left:1118.6px;top:487.8px;width:79.8px;background:#f1f0e0"></div>
<div class="gl" style="left:1198.4px;top:487.8px;width:81.6px;background:#f7dfba"></div>
<div class="c" style="left:72.6px;top:459.6px">01/11/23</div>
<div class="c" style="left:166px;top:459.6px">Amazon</div>
<div class="c" style="left:317.6px;width:89.6px;text-align:right;top:459.6px">$90.69</div>
<div class="c" style="left:412.2px;width:85px;text-align:right;top:459.6px">$90.69</div>
<div class="c" style="left:502.2px;width:81.4px;text-align:right;top:459.6px">$0.00</div>
<div class="c" style="left:588.6px;width:61.9px;text-align:center;top:459.6px">100%</div>
<div class="c" style="left:650.5px;width:62.9px;text-align:center;top:459.6px">0%</div>
<div class="c" style="left:794.4px;width:76.2px;text-align:right;top:459.6px">$0.00</div>
<div class="c" style="left:875.6px;width:81px;text-align:center;top:459.6px">100%</div>
<div class="c" style="left:956.6px;width:75.8px;text-align:right;top:459.6px">$90.69</div>
<div class="c" style="left:1118.6px;width:74.8px;text-align:right;top:459.6px">$0.00</div>
<div class="gl" style="left:0;top:507.5px;width:315.8px;background:#ececec"></div>
<div class="gl" style="left:412.2px;top:507.5px;width:301.2px;background:#ececec"></div>
<div class="gl" style="left:713.4px;top:507.5px;width:81px;background:#fad9dd"></div>
<div class="gl" style="left:794.4px;top:507.5px;width:81.2px;background:#f6e6e9"></div>
<div class="gl" style="left:875.6px;top:507.5px;width:81px;background:#d3e6d5"></div>
<div class="gl" style="left:956.6px;top:507.5px;width:80.8px;background:#e3ebe5"></div>
<div class="gl" style="left:1037.4px;top:507.5px;width:81.2px;background:#f5f5a0"></div>
<div class="gl" style="left:1118.6px;top:507.5px;width:79.8px;background:#f1f0e0"></div>
<div class="gl" style="left:1198.4px;top:507.5px;width:81.6px;background:#f7dfba"></div>
<div class="c" style="left:72.6px;top:491.6px">01/10/23</div>
<div class="c" style="left:166px;top:491.6px">Amazon</div>
<div class="c" style="left:317.6px;width:89.6px;text-align:right;top:491.6px">$38.75</div>
<div class="c" style="left:412.2px;width:85px;text-align:right;top:491.6px">$38.75</div>
<div class="c" style="left:502.2px;width:81.4px;text-align:right;top:491.6px">$0.00</div>
<div class="c" style="left:588.6px;width:61.9px;text-align:center;top:491.6px">100%</div>
<div class="c" style="left:650.5px;width:62.9px;text-align:center;top:491.6px">0%</div>
<div class="c" style="left:794.4px;width:76.2px;text-align:right;top:491.6px">$0.00</div>
<div class="c" style="left:956.6px;width:75.8px;text-align:right;top:491.6px">$0.00</div>
<div class="c" style="left:1037.4px;width:81.2px;text-align:center;top:491.6px">100%</div>
<div class="c" style="left:1118.6px;width:74.8px;text-align:right;top:491.6px">$38.75</div>
<div class="gl" style="left:0;top:527.2px;width:315.8px;background:#ececec"></div>
<div class="gl" style="left:412.2px;top:527.2px;width:301.2px;background:#ececec"></div>
<div class="gl" style="left:713.4px;top:527.2px;width:81px;background:#fad9dd"></div>
<div class="gl" style="left:794.4px;top:527.2px;width:81.2px;background:#f6e6e9"></div>
<div class="gl" style="left:875.6px;top:527.2px;width:81px;background:#d3e6d5"></div>
<div class="gl" style="left:956.6px;top:527.2px;width:80.8px;background:#e3ebe5"></div>
<div class="gl" style="left:1037.4px;top:527.2px;width:81.2px;background:#f5f5a0"></div>
<div class="gl" style="left:1118.6px;top:527.2px;width:79.8px;background:#f1f0e0"></div>
<div class="gl" style="left:1198.4px;top:527.2px;width:81.6px;background:#f7dfba"></div>
<div class="c" style="left:72.6px;top:511.3px">07/07/23</div>
<div class="c" style="left:166px;top:511.3px">Amazon</div>
<div class="c" style="left:317.6px;width:89.6px;text-align:right;top:511.3px">$50,000.00</div>
<div class="c" style="left:412.2px;width:85px;text-align:right;top:511.3px">$50,000.00</div>
<div class="c" style="left:502.2px;width:81.4px;text-align:right;top:511.3px">$0.00</div>
<div class="c" style="left:588.6px;width:61.9px;text-align:center;top:511.3px">100%</div>
<div class="c" style="left:650.5px;width:62.9px;text-align:center;top:511.3px">0%</div>
<div class="c" style="left:794.4px;width:76.2px;text-align:right;top:511.3px">$0.00</div>
<div class="c" style="left:956.6px;width:75.8px;text-align:right;top:511.3px">$0.00</div>
<div class="c" style="left:1037.4px;width:81.2px;text-align:center;top:511.3px">100%</div>
<div class="c" style="left:1118.6px;width:74.8px;text-align:right;top:511.3px">$50,000.00</div>
<div class="gl" style="left:0;top:546.9px;width:315.8px;background:#ececec"></div>
<div class="gl" style="left:412.2px;top:546.9px;width:301.2px;background:#ececec"></div>
<div class="gl" style="left:713.4px;top:546.9px;width:81px;background:#fad9dd"></div>
<div class="gl" style="left:794.4px;top:546.9px;width:81.2px;background:#f6e6e9"></div>
<div class="gl" style="left:875.6px;top:546.9px;width:81px;background:#d3e6d5"></div>
<div class="gl" style="left:956.6px;top:546.9px;width:80.8px;background:#e3ebe5"></div>
<div class="gl" style="left:1037.4px;top:546.9px;width:81.2px;background:#f5f5a0"></div>
<div class="gl" style="left:1118.6px;top:546.9px;width:79.8px;background:#f1f0e0"></div>
<div class="gl" style="left:1198.4px;top:546.9px;width:81.6px;background:#f7dfba"></div>
<div class="c" style="left:72.6px;top:531px">04/04/23</div>
<div class="c" style="left:166px;top:531px">Amazon</div>
<div class="c" style="left:317.6px;width:89.6px;text-align:right;top:531px">$30,000.00</div>
<div class="c" style="left:412.2px;width:85px;text-align:right;top:531px">$30,000.00</div>
<div class="c" style="left:502.2px;width:81.4px;text-align:right;top:531px">$0.00</div>
<div class="c" style="left:588.6px;width:61.9px;text-align:center;top:531px">100%</div>
<div class="c" style="left:650.5px;width:62.9px;text-align:center;top:531px">0%</div>
<div class="c" style="left:794.4px;width:76.2px;text-align:right;top:531px">$0.00</div>
<div class="c" style="left:956.6px;width:75.8px;text-align:right;top:531px">$0.00</div>
<div class="c" style="left:1118.6px;width:74.8px;text-align:right;top:531px">$0.00</div>
<div class="c" style="left:1198.4px;width:81.6px;text-align:center;top:531px">100%</div>
<div class="gl" style="left:0;top:566.6px;width:315.8px;background:#ececec"></div>
<div class="gl" style="left:412.2px;top:566.6px;width:301.2px;background:#ececec"></div>
<div class="gl" style="left:713.4px;top:566.6px;width:81px;background:#fad9dd"></div>
<div class="gl" style="left:794.4px;top:566.6px;width:81.2px;background:#f6e6e9"></div>
<div class="gl" style="left:875.6px;top:566.6px;width:81px;background:#d3e6d5"></div>
<div class="gl" style="left:956.6px;top:566.6px;width:80.8px;background:#e3ebe5"></div>
<div class="gl" style="left:1037.4px;top:566.6px;width:81.2px;background:#f5f5a0"></div>
<div class="gl" style="left:1118.6px;top:566.6px;width:79.8px;background:#f1f0e0"></div>
<div class="gl" style="left:1198.4px;top:566.6px;width:81.6px;background:#f7dfba"></div>
<div class="c" style="left:72.6px;top:550.7px">01/13/23</div>
<div class="c" style="left:166px;top:550.7px">Cox Business</div>
<div class="c" style="left:317.6px;width:89.6px;text-align:right;top:550.7px">$202.40</div>
<div class="c" style="left:412.2px;width:85px;text-align:right;top:550.7px">$202.40</div>
<div class="c" style="left:502.2px;width:81.4px;text-align:right;top:550.7px">$0.00</div>
<div class="c" style="left:588.6px;width:61.9px;text-align:center;top:550.7px">100%</div>
<div class="c" style="left:650.5px;width:62.9px;text-align:center;top:550.7px">0%</div>
<div class="c" style="left:794.4px;width:76.2px;text-align:right;top:550.7px">$0.00</div>
<div class="c" style="left:956.6px;width:75.8px;text-align:right;top:550.7px">$0.00</div>
<div class="c" style="left:1118.6px;width:74.8px;text-align:right;top:550.7px">$0.00</div>
<div class="c" style="left:1198.4px;width:81.6px;text-align:center;top:550.7px">0%</div>
<div class="gl" style="left:0;top:586.3px;width:315.8px;background:#ececec"></div>
<div class="gl" style="left:412.2px;top:586.3px;width:301.2px;background:#ececec"></div>
<div class="gl" style="left:713.4px;top:586.3px;width:81px;background:#fad9dd"></div>
<div class="gl" style="left:794.4px;top:586.3px;width:81.2px;background:#f6e6e9"></div>
<div class="gl" style="left:875.6px;top:586.3px;width:81px;background:#d3e6d5"></div>
<div class="gl" style="left:956.6px;top:586.3px;width:80.8px;background:#e3ebe5"></div>
<div class="gl" style="left:1037.4px;top:586.3px;width:81.2px;background:#f5f5a0"></div>
<div class="gl" style="left:1118.6px;top:586.3px;width:79.8px;background:#f1f0e0"></div>
<div class="gl" style="left:1198.4px;top:586.3px;width:81.6px;background:#f7dfba"></div>
<div class="c" style="left:72.6px;top:570.4px">02/26/23</div>
<div class="c" style="left:166px;top:570.4px">Adobe</div>
<div class="c" style="left:317.6px;width:89.6px;text-align:right;top:570.4px">$21.75</div>
<div class="c" style="left:412.2px;width:85px;text-align:right;top:570.4px">$21.75</div>
<div class="c" style="left:502.2px;width:81.4px;text-align:right;top:570.4px">$0.00</div>
<div class="c" style="left:588.6px;width:61.9px;text-align:center;top:570.4px">100%</div>
<div class="c" style="left:650.5px;width:62.9px;text-align:center;top:570.4px">0%</div>
<div class="c" style="left:794.4px;width:76.2px;text-align:right;top:570.4px">$0.00</div>
<div class="c" style="left:956.6px;width:75.8px;text-align:right;top:570.4px">$0.00</div>
<div class="c" style="left:1118.6px;width:74.8px;text-align:right;top:570.4px">$0.00</div>
<div class="c" style="left:1198.4px;width:81.6px;text-align:center;top:570.4px">100%</div>
<div class="gl" style="left:0;top:618.6px;width:315.8px;background:#ececec"></div>
<div class="gl" style="left:412.2px;top:618.6px;width:301.2px;background:#ececec"></div>
<div class="gl" style="left:713.4px;top:618.6px;width:81px;background:#fad9dd"></div>
<div class="gl" style="left:794.4px;top:618.6px;width:81.2px;background:#f6e6e9"></div>
<div class="gl" style="left:875.6px;top:618.6px;width:81px;background:#d3e6d5"></div>
<div class="gl" style="left:956.6px;top:618.6px;width:80.8px;background:#e3ebe5"></div>
<div class="gl" style="left:1037.4px;top:618.6px;width:81.2px;background:#f5f5a0"></div>
<div class="gl" style="left:1118.6px;top:618.6px;width:79.8px;background:#f1f0e0"></div>
<div class="gl" style="left:1198.4px;top:618.6px;width:81.6px;background:#f7dfba"></div>
<div class="c" style="left:72.6px;top:590.1px">04/21/23</div>
<div class="c" style="left:166px;top:590.1px">Amazon</div>
<div class="c" style="left:317.6px;width:89.6px;text-align:right;top:590.1px">$150.17</div>
<div class="c" style="left:412.2px;width:85px;text-align:right;top:590.1px">$150.17</div>
<div class="c" style="left:502.2px;width:81.4px;text-align:right;top:590.1px">$0.00</div>
<div class="c" style="left:588.6px;width:61.9px;text-align:center;top:590.1px">100%</div>
<div class="c" style="left:650.5px;width:62.9px;text-align:center;top:590.1px">0%</div>
<div class="c" style="left:794.4px;width:76.2px;text-align:right;top:590.1px">$0.00</div>
<div class="c" style="left:956.6px;width:75.8px;text-align:right;top:590.1px">$0.00</div>
<div class="c" style="left:1118.6px;width:74.8px;text-align:right;top:590.1px">$0.00</div>
<div class="c" style="left:1198.4px;width:81.6px;text-align:center;top:590.1px">100%</div>
<div class="gl" style="left:0;top:638.2px;width:315.8px;background:#ececec"></div>
<div class="gl" style="left:412.2px;top:638.2px;width:301.2px;background:#ececec"></div>
<div class="gl" style="left:713.4px;top:638.2px;width:81px;background:#fad9dd"></div>
<div class="gl" style="left:794.4px;top:638.2px;width:81.2px;background:#f6e6e9"></div>
<div class="gl" style="left:875.6px;top:638.2px;width:81px;background:#d3e6d5"></div>
<div class="gl" style="left:956.6px;top:638.2px;width:80.8px;background:#e3ebe5"></div>
<div class="gl" style="left:1037.4px;top:638.2px;width:81.2px;background:#f5f5a0"></div>
<div class="gl" style="left:1118.6px;top:638.2px;width:79.8px;background:#f1f0e0"></div>
<div class="gl" style="left:1198.4px;top:638.2px;width:81.6px;background:#f7dfba"></div>
<div class="c" style="left:72.6px;top:622.4px">01/12/23</div>
<div class="c" style="left:166px;top:622.4px">Amazon</div>
<div class="c" style="left:317.6px;width:89.6px;text-align:right;top:622.4px">$62.80</div>
<div class="c" style="left:412.2px;width:85px;text-align:right;top:622.4px">$62.80</div>
<div class="c" style="left:502.2px;width:81.4px;text-align:right;top:622.4px">$0.00</div>
<div class="c" style="left:588.6px;width:61.9px;text-align:center;top:622.4px">100%</div>
<div class="c" style="left:650.5px;width:62.9px;text-align:center;top:622.4px">0%</div>
<div class="c" style="left:794.4px;width:76.2px;text-align:right;top:622.4px">$0.00</div>
<div class="c" style="left:956.6px;width:75.8px;text-align:right;top:622.4px">$0.00</div>
<div class="c" style="left:1118.6px;width:74.8px;text-align:right;top:622.4px">$0.00</div>
<div class="gl" style="left:0;top:670.3px;width:315.8px;background:#ececec"></div>
<div class="gl" style="left:412.2px;top:670.3px;width:301.2px;background:#ececec"></div>
<div class="gl" style="left:713.4px;top:670.3px;width:81px;background:#fad9dd"></div>
<div class="gl" style="left:794.4px;top:670.3px;width:81.2px;background:#f6e6e9"></div>
<div class="gl" style="left:875.6px;top:670.3px;width:81px;background:#d3e6d5"></div>
<div class="gl" style="left:956.6px;top:670.3px;width:80.8px;background:#e3ebe5"></div>
<div class="gl" style="left:1037.4px;top:670.3px;width:81.2px;background:#f5f5a0"></div>
<div class="gl" style="left:1118.6px;top:670.3px;width:79.8px;background:#f1f0e0"></div>
<div class="gl" style="left:1198.4px;top:670.3px;width:81.6px;background:#f7dfba"></div>
<div class="c" style="left:72.6px;top:642px">05/05/23</div>
<div class="c" style="left:166px;top:642px">Amazon</div>
<div class="c" style="left:317.6px;width:89.6px;text-align:right;top:642px">$100,000.00</div>
<div class="c" style="left:412.2px;width:85px;text-align:right;top:642px">$100,000.00</div>
<div class="c" style="left:502.2px;width:81.4px;text-align:right;top:642px">$0.00</div>
<div class="c" style="left:588.6px;width:61.9px;text-align:center;top:642px">100%</div>
<div class="c" style="left:650.5px;width:62.9px;text-align:center;top:642px">0%</div>
<div class="c" style="left:713.4px;width:81px;text-align:center;top:642px">20%</div>
<div class="c" style="left:794.4px;width:76.2px;text-align:right;top:642px">$20,000.00</div>
<div class="c" style="left:875.6px;width:81px;text-align:center;top:642px">20%</div>
<div class="c" style="left:956.6px;width:75.8px;text-align:right;top:642px">$20,000.00</div>
<div class="c" style="left:1037.4px;width:81.2px;text-align:center;top:642px">20%</div>
<div class="c" style="left:1118.6px;width:74.8px;text-align:right;top:642px">$20,000.00</div>
<div class="c" style="left:1198.4px;width:81.6px;text-align:center;top:642px">20%</div>
<div class="gl" style="left:0;top:690px;width:315.8px;background:#ececec"></div>
<div class="gl" style="left:412.2px;top:690px;width:301.2px;background:#ececec"></div>
<div class="gl" style="left:713.4px;top:690px;width:81px;background:#fad9dd"></div>
<div class="gl" style="left:794.4px;top:690px;width:81.2px;background:#f6e6e9"></div>
<div class="gl" style="left:875.6px;top:690px;width:81px;background:#d3e6d5"></div>
<div class="gl" style="left:956.6px;top:690px;width:80.8px;background:#e3ebe5"></div>
<div class="gl" style="left:1037.4px;top:690px;width:81.2px;background:#f5f5a0"></div>
<div class="gl" style="left:1118.6px;top:690px;width:79.8px;background:#f1f0e0"></div>
<div class="gl" style="left:1198.4px;top:690px;width:81.6px;background:#f7dfba"></div>
<div class="c" style="left:72.6px;top:674.1px">06/06/23</div>
<div class="c" style="left:166px;top:674.1px">Amazon</div>
<div class="c" style="left:317.6px;width:89.6px;text-align:right;top:674.1px">$72.79</div>
<div class="c" style="left:412.2px;width:85px;text-align:right;top:674.1px">$72.79</div>
<div class="c" style="left:502.2px;width:81.4px;text-align:right;top:674.1px">$0.00</div>
<div class="c" style="left:588.6px;width:61.9px;text-align:center;top:674.1px">100%</div>
<div class="c" style="left:650.5px;width:62.9px;text-align:center;top:674.1px">0%</div>
<div class="c" style="left:794.4px;width:76.2px;text-align:right;top:674.1px">$0.00</div>
<div class="c" style="left:956.6px;width:75.8px;text-align:right;top:674.1px">$0.00</div>
<div class="c" style="left:1118.6px;width:74.8px;text-align:right;top:674.1px">$0.00</div>
</div></body></html>
